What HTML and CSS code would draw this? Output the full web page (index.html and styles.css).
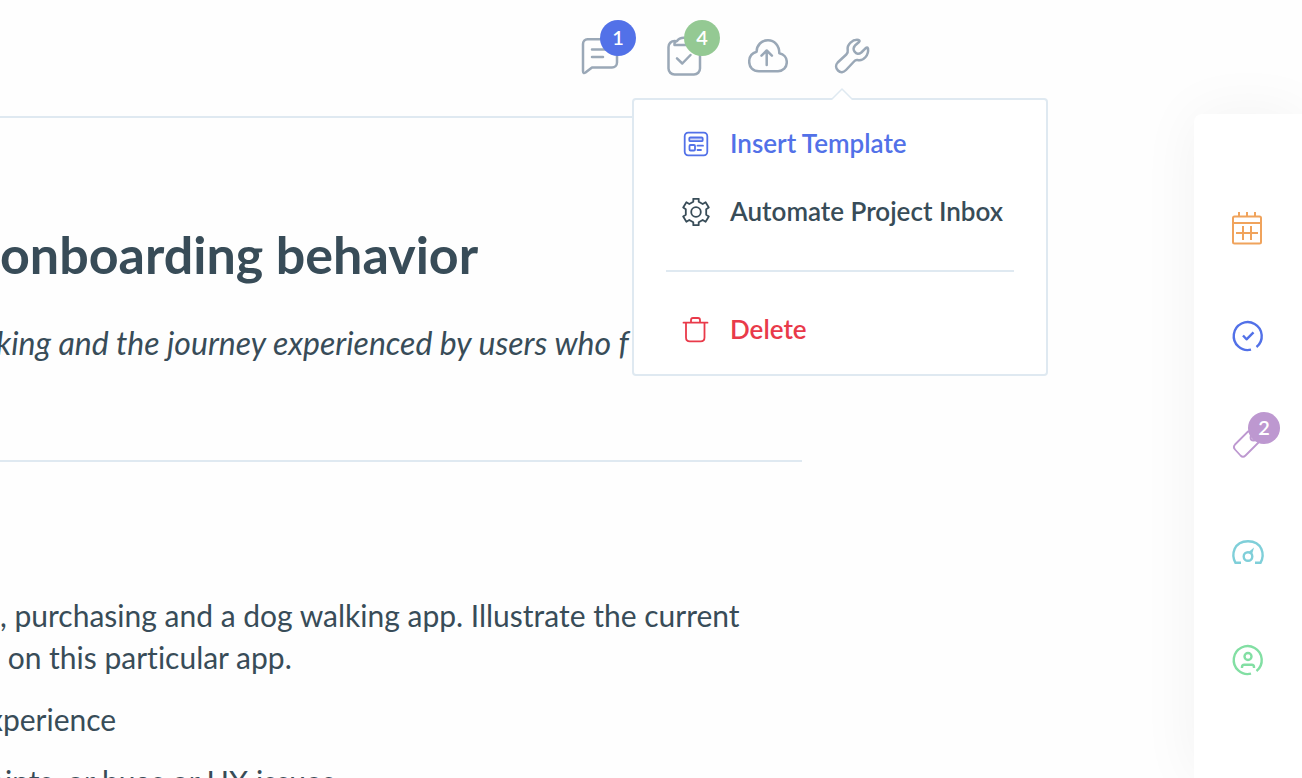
FILE: index.html
```html
<!DOCTYPE html>
<html lang="en">
<head>
    <meta charset="UTF-8">
    <meta name="viewport" content="width=device-width, initial-scale=1.0">
    <title>Project Brief</title>
    <link rel="stylesheet" href="styles.css">
</head>
<body>
    <div class="page">
        <div class="workspace">
            <header class="topbar">
                <nav class="toolbar">
                    <button type="button" class="tool" aria-label="Comments">
                        <svg viewBox="0 0 40 40">
                            <path d="M7.500 3.200H32a5 5 0 0 1 5 5V26.500a5 5 0 0 1-5 5H12L5.500 36.500Q3 38 3 35V8a4.800 4.800 0 0 1 4.500-4.800z"/>
                            <path d="M12 13.500H29M12 21H23"/>
                        </svg>
                        <span class="badge badge-blue">1</span>
                    </button>
                    <button type="button" class="tool" aria-label="Tasks">
                        <svg viewBox="0 0 40 40">
                            <path d="M11 5H10.500a6 6 0 0 0-6 6V32.500a6 6 0 0 0 6 6H30a6 6 0 0 0 6-6V11a6 6 0 0 0-6-6H29"/>
                            <path d="M10.500 9V7Q11 5.500 13 5Q15 1.800 20 1.800T27 5Q29.500 5.500 29.500 7.500V9Z"/>
                            <path d="M13 22.300L18.300 27.500L26.500 19"/>
                        </svg>
                        <span class="badge badge-green">4</span>
                    </button>
                    <button type="button" class="tool" aria-label="Upload">
                        <svg viewBox="0 0 40 40">
                            <path d="M8.600 15.800C8.700 9 13.500 4.300 20 4.300S31.300 9.500 31.300 17.200C35.800 18 38.800 21.500 38.800 26C38.800 31.500 35 35.200 30 35.200H11C5 35.200 1.200 31.200 1.200 25.700C1.200 20.500 4.300 17 8.600 15.800z"/>
                            <path d="M18.700 29V15M13.500 19.700L18.700 14.500L23.900 19.700"/>
                        </svg>
                    </button>
                    <button type="button" class="tool" aria-label="Tools" aria-expanded="true">
                        <svg viewBox="0 0 40 40">
                            <path d="M5.700 26.500L14.300 18.500Q16.200 16.700 15.700 14C14.800 8.500 20.500 3 26.500 3.900Q28.300 4.500 27 6L23 9.500Q20.500 12.500 22.500 15.500Q25.500 19.500 29.300 16.500L33.500 12.300Q35.500 10.500 36 12.500C37 19 31.500 25.500 25.500 24Q23.500 23.700 22.500 25L14 34C11.500 36.700 8.500 37 6 34.500C3.500 32 3.500 28.800 5.700 26.500z"/>
                        </svg>
                    </button>

                    <div class="menu">
                        <svg class="menu-arrow" viewBox="0 0 24 12"><path d="M1 12L12 1L23 12"/></svg>
                        <button type="button" class="menu-item active">
                            <svg viewBox="0 0 28 28">
                                <rect x="2.700" y="2.700" width="22.600" height="22.600" rx="3.500"/>
                                <rect class="tint" x="7.300" y="7.500" width="13.400" height="3.700" rx="1"/>
                                <rect x="7.500" y="15" width="5.500" height="5.500" rx="1"/>
                                <path d="M15.500 15.700H21M15.500 20H19"/>
                            </svg>
                            <span>Insert Template</span>
                        </button>
                        <button type="button" class="menu-item">
                            <svg viewBox="0 0 28 28">
                                <path d="M11.300 3.700V.8H16.700V3.700L20.700 6L23.600 4.300L26.800 9.500L24.200 11.200V16.800L26.800 18.500L23.600 23.700L20.700 22L16.700 24.300V27.200H11.300V24.300L7.300 22L4.400 23.700L1.200 18.500L3.800 16.800V11.200L1.200 9.500L4.400 4.300L7.300 6z"/>
                                <circle cx="14" cy="14" r="4.800"/>
                            </svg>
                            <span>Automate Project Inbox</span>
                        </button>
                        <hr>
                        <button type="button" class="menu-item danger">
                            <svg viewBox="0 0 28 28">
                                <path d="M1.500 6.700H25.500M4 7V21.500Q4 25.300 7.800 25.300H18.700Q22.500 25.300 22.500 21.500V7M9 6.500V4Q9 2 11 2H16Q18 2 18 4V6.500"/>
                            </svg>
                            <span>Delete</span>
                        </button>
                    </div>
                </nav>
                <hr>
            </header>

            <main class="document">
                <h1>onboarding behavior</h1>
                <p class="summary">king and the journey experienced by users who f</p>
                <hr>
                <p class="brief">, purchasing and a dog walking app. Illustrate the current<br>&nbsp;on this particular app.</p>
                <ul>
                    <li>xperience</li>
                    <li>oints, or bugs or UX issues</li>
                </ul>
            </main>
        </div>

        <aside class="sidebar">
            <button type="button" class="side-tool orange" aria-label="Calendar">
                <svg viewBox="0 0 36 36">
                    <path d="M3 13H31.500M9 6V2M17 6V2M25 6V2M6 23H28M13 16V30M21 16V30"/>
                    <rect x="3" y="6.500" width="28" height="27" rx="1.500"/>
                </svg>
            </button>
            <button type="button" class="side-tool blue" aria-label="Progress">
                <svg viewBox="0 0 36 36">
                    <path d="M21 31.700A14 14 0 1 1 26.500 29"/>
                    <path d="M13 17.500L16.500 21.300L23.500 14.300"/>
                </svg>
            </button>
            <button type="button" class="side-tool purple" aria-label="Tags">
                <svg viewBox="0 0 36 36">
                    <path class="thin" d="M18 5.500L5 18.500Q2.700 21 5 23.500L10.500 29.500Q13 32 15.500 29.500L31 14V5.500z"/>
                    <circle class="thin" cx="23.500" cy="11.500" r="3"/>
                </svg>
                <span class="badge badge-purple">2</span>
            </button>
            <button type="button" class="side-tool teal" aria-label="Performance">
                <svg viewBox="0 0 36 36">
                    <path d="M11 28.800H5.500C1 21 3.500 7.200 18 7.200S35 21 30.500 28.800H25"/>
                    <circle cx="18" cy="22.500" r="4.300"/>
                    <path class="solid" d="M18 18.500L24 13.500L22 20.500z"/>
                </svg>
            </button>
            <button type="button" class="side-tool green" aria-label="Account">
                <svg viewBox="0 0 36 36">
                    <path d="M21 31.700A14 14 0 1 1 26.500 29"/>
                    <circle cx="18" cy="14.500" r="3.500"/>
                    <path d="M12 26V25Q12 22.700 14.300 22.700H21.700Q24 22.700 24 25V26"/>
                </svg>
            </button>
        </aside>
    </div>
</body>
</html>
```
FILE: styles.css
```css
* {
    margin: 0;
    padding: 0;
    box-sizing: border-box;
}

body {
    font-family: Lato, "Open Sans", sans-serif;
    font-variant-ligatures: none;
    background: #fefefe;
    color: #384c58;
    height: 100vh;
    overflow: hidden;
}

button {
    border: none;
    background: none;
    font: inherit;
    color: inherit;
    cursor: pointer;
}

svg {
    display: block;
    fill: none;
    stroke: currentColor;
    stroke-linecap: round;
    stroke-linejoin: round;
}

hr {
    border: none;
    height: 2px;
    background: #dfe9f1;
}

.page {
    display: flex;
    height: 100vh;
}

.workspace {
    flex: 1;
    min-width: 0;
}

/* top bar */
.topbar hr,
.document hr {
    margin-right: 392px;
}

.toolbar {
    position: relative;
    display: flex;
    justify-content: flex-end;
    height: 116px;
    padding-right: 300px;
}

.tool {
    position: relative;
    width: 84px;
    height: 112px;
    color: #9aa8b7;
}

.tool svg {
    width: 40px;
    height: 40px;
    margin: 0 auto;
    stroke-width: 2.5;
}

.badge {
    position: absolute;
    border-radius: 50%;
    color: white;
    font-size: 20px;
    font-weight: 600;
    text-align: center;
}

.tool .badge {
    top: 20px;
    left: 42px;
    width: 36px;
    height: 36px;
    line-height: 34px;
}

.badge-blue {
    background: #5271e8;
}

.badge-green {
    background: #94c993;
}

.badge-purple {
    background: #bd98d0;
}

/* dropdown */
.menu {
    position: absolute;
    top: 98px;
    right: 146px;
    width: 416px;
    padding: 10px 0;
    background: white;
    border: 2px solid #dfe9f1;
    border-radius: 4px;
    z-index: 1;
}

.menu-arrow {
    position: absolute;
    top: -12px;
    left: 196px;
    width: 24px;
    height: 12px;
    fill: white;
    stroke: #dfe9f1;
    stroke-width: 1.5;
    stroke-linecap: butt;
}

.menu-item {
    display: flex;
    align-items: center;
    gap: 20px;
    width: 100%;
    height: 68px;
    padding-left: 48px;
    font-size: 26px;
    font-weight: 600;
    text-align: left;
}

.menu-item span {
    padding-bottom: 3px;
}

.menu-item svg {
    width: 28px;
    height: 28px;
    stroke-width: 1.8;
}

.menu-item.active {
    color: #5271e8;
}

.menu-item.danger {
    color: #e93a4a;
}

.tint {
    fill: #d5dcfa;
}

.menu hr {
    margin: 24px 32px;
}

/* document */
.document {
    padding-top: 106px;
    font-size: 30px;
    line-height: 42px;
}

h1 {
    font-size: 52px;
    line-height: 60px;
    font-weight: 700;
}

.summary {
    margin: 38px 0 96px -4px;
    font-size: 32px;
    font-style: italic;
    white-space: nowrap;
}

.brief {
    margin: 132px 0 20px;
    white-space: nowrap;
}

.document ul {
    list-style: none;
    margin-left: -12px;
}

.document li {
    margin-bottom: 20px;
}

/* sidebar */
.sidebar {
    width: 108px;
    margin-top: 114px;
    padding-top: 60px;
    background: white;
    border-radius: 8px 0 0 0;
    box-shadow: 0 0 60px rgba(0, 0, 0, 0.05);
}

.side-tool {
    position: relative;
    display: block;
    width: 100%;
    height: 108px;
}

.side-tool svg {
    width: 36px;
    height: 36px;
    margin: 0 auto;
    stroke-width: 2.4;
    stroke-linecap: butt;
}

.orange svg {
    stroke-width: 2;
}

.side-tool .badge {
    top: 22px;
    left: 54px;
    width: 32px;
    height: 32px;
    line-height: 30px;
}

.side-tool .thin {
    stroke-width: 1.8;
}

.solid {
    fill: currentColor;
    stroke: none;
}

.orange {
    color: #f0a35c;
}

.blue {
    color: #5271e8;
}

.purple {
    color: #bd98d0;
}

.teal {
    color: #7fcfd9;
}

.green {
    color: #82dfa3;
}
```
